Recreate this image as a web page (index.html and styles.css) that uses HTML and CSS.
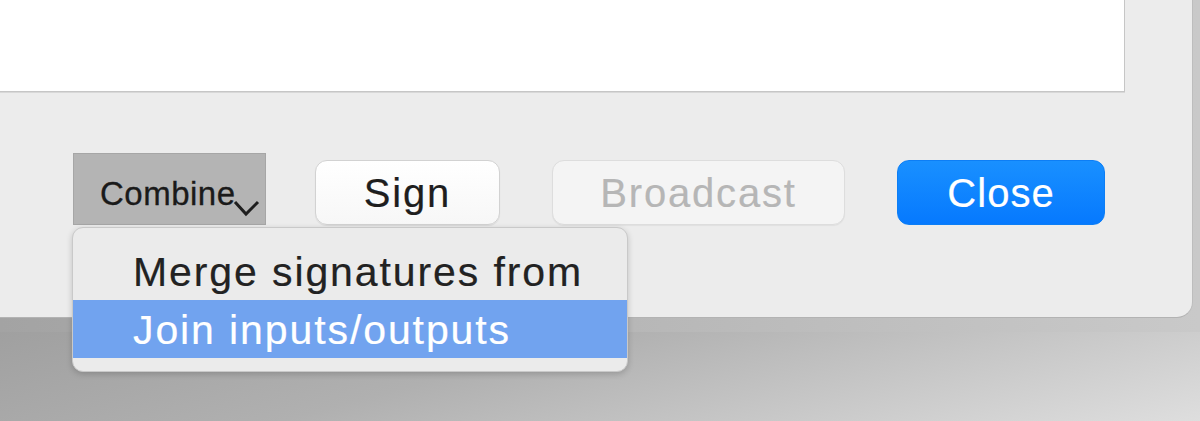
FILE: index.html
```html
<!DOCTYPE html>
<html lang="en">
<head>
  <meta charset="UTF-8">
  <title>Sign Transaction</title>
  <link rel="stylesheet" href="styles.css">
</head>
<body>

<div class="backwin">
  <div class="sheet">
    <div class="pane"></div>

    <div class="actions">
      <div class="combine">
        <span class="combine-label">Combine</span>
        <svg class="chevron" width="27" height="18" viewBox="0 0 27 18">
          <polyline points="2,3 13,15 25,3" fill="none" stroke="#1e1e1e" stroke-width="3" stroke-linejoin="miter"/>
        </svg>

        <ul class="menu">
          <li class="menu-item">Merge signatures from</li>
          <li class="menu-item selected">Join inputs/outputs</li>
        </ul>
      </div>

      <button class="btn sign">Sign</button>
      <button class="btn broadcast" disabled>Broadcast</button>
      <button class="btn close">Close</button>
    </div>
  </div>
</div>
<div class="floor"></div>

</body>
</html>
```

FILE: styles.css
```css
body {
  margin: 0;
  height: 421px;
  overflow: hidden;
  font-family: "Liberation Sans", Arial, sans-serif;
  background: #c4c4c4;
}

.backwin {
  height: 332px;
  background: linear-gradient(to right, #a3a3a3, #c9c9c9);
}

.floor {
  height: 89px;
  background: linear-gradient(165deg, #a0a0a0 0%, #b0b0b0 40%, #dedede 100%);
}

.sheet {
  box-sizing: border-box;
  width: 1193px;
  height: 318px;
  background: #ececec;
  border-right: 1px solid #bdbdbd;
  border-bottom: 1px solid #b3b3b3;
  border-bottom-right-radius: 16px;
}

.pane {
  width: 1124px;
  height: 91px;
  background: #ffffff;
  border-right: 1px solid #c6c6c6;
  border-bottom: 1px solid #c6c6c6;
  box-shadow: 0 1px 0 #d8d8d8;
}

.actions {
  display: flex;
  align-items: flex-end;
  padding: 61px 0 0 73px;
}

.combine {
  position: relative;
  box-sizing: border-box;
  width: 193px;
  height: 72px;
  background: #b4b4b4;
  border: 1px solid #a6a6a6;
  padding: 21px 0 0 26px;
}

.combine-label {
  font-size: 33px;
  letter-spacing: 0.5px;
  color: #1a1a1a;
  -webkit-text-stroke: 0.3px #1a1a1a;
}

.chevron {
  position: absolute;
  left: 159px;
  top: 45px;
}

.menu {
  position: absolute;
  top: 73px;
  left: -2px;
  width: 556px;
  height: 145px;
  box-sizing: border-box;
  margin: 0;
  padding: 14px 0 11px;
  list-style: none;
  background: #ebebeb;
  border: 1px solid #c9c9c9;
  border-radius: 11px;
  box-shadow: 0 2px 6px rgba(0, 0, 0, 0.18);
  z-index: 2;
}

.menu-item {
  height: 58px;
  line-height: 60px;
  padding-left: 60px;
  font-size: 41px;
  letter-spacing: 1.9px;
  color: #222222;
  white-space: nowrap;
  -webkit-text-stroke: 0.2px currentColor;
}

.menu-item.selected {
  background: #71a3ef;
  color: #ffffff;
}

.btn {
  box-sizing: border-box;
  height: 65px;
  margin-left: 52px;
  padding: 2px 0 0;
  border-radius: 12px;
  font-family: "Liberation Sans", Arial, sans-serif;
  font-size: 40px;
  letter-spacing: 1.8px;
  -webkit-text-stroke: 0.2px currentColor;
}

.sign {
  width: 185px;
  margin-left: 49px;
  color: #1e1e1e;
  background: linear-gradient(#ffffff, #f7f7f7);
  border: 1px solid #d2d2d2;
  box-shadow: 0 1px 1px rgba(0, 0, 0, 0.08);
}

.broadcast {
  width: 293px;
  color: #b6b6b6;
  background: #f4f4f4;
  border: 1px solid #dddddd;
  box-shadow: 0 1px 1px rgba(0, 0, 0, 0.05);
}

.close {
  width: 208px;
  color: #ffffff;
  letter-spacing: 1px;
  background: linear-gradient(#1990ff, #0679fe);
  border: 1px solid #0d7ef5;
}
```
